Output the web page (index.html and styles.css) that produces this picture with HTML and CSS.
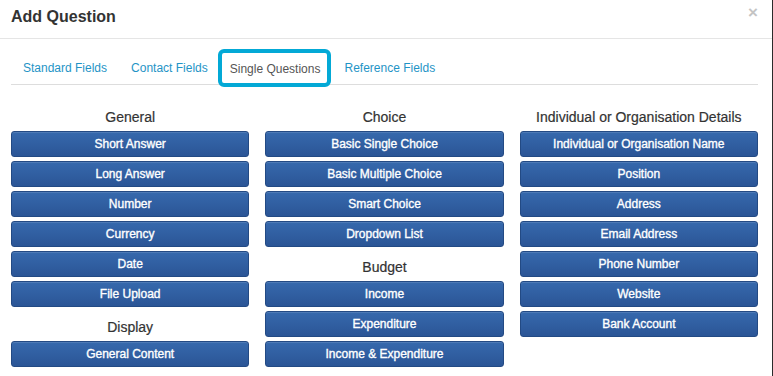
FILE: index.html
```html
<!DOCTYPE html>
<html>
<head>
<meta charset="utf-8">
<link rel="stylesheet" href="styles.css">
</head>
<body>
<div class="modal">
  <div class="modal-header">
    <h4 class="modal-title">Add Question</h4>
    <span class="close">&times;</span>
  </div>
  <div class="modal-body">
    <ul class="tabs">
      <li><a class="tab">Standard Fields</a></li>
      <li><a class="tab">Contact Fields</a></li>
      <li><a class="tab active">Single Questions</a></li>
      <li><a class="tab">Reference Fields</a></li>
    </ul>
    <div class="columns">
      <div class="col">
        <h5 class="group">General</h5>
        <button class="btn">Short Answer</button>
        <button class="btn">Long Answer</button>
        <button class="btn">Number</button>
        <button class="btn">Currency</button>
        <button class="btn">Date</button>
        <button class="btn">File Upload</button>
        <h5 class="group">Display</h5>
        <button class="btn">General Content</button>
      </div>
      <div class="col">
        <h5 class="group">Choice</h5>
        <button class="btn">Basic Single Choice</button>
        <button class="btn">Basic Multiple Choice</button>
        <button class="btn">Smart Choice</button>
        <button class="btn">Dropdown List</button>
        <h5 class="group">Budget</h5>
        <button class="btn">Income</button>
        <button class="btn">Expenditure</button>
        <button class="btn">Income &amp; Expenditure</button>
      </div>
      <div class="col">
        <h5 class="group">Individual or Organisation Details</h5>
        <button class="btn">Individual or Organisation Name</button>
        <button class="btn">Position</button>
        <button class="btn">Address</button>
        <button class="btn">Email Address</button>
        <button class="btn">Phone Number</button>
        <button class="btn">Website</button>
        <button class="btn">Bank Account</button>
      </div>
    </div>
  </div>
</div>
</body>
</html>
```
FILE: styles.css
```css
html, body {
  margin: 0;
  padding: 0;
  height: 100%;
}
body {
  background: #2b2b2b;
  font-family: "Liberation Sans", Arial, sans-serif;
  color: #333;
  overflow: hidden;
}
.modal {
  width: 772px;
  height: 100%;
  background: #fff;
}
.modal-header {
  height: 38px;
  border-bottom: 1px solid #e5e5e5;
  display: flex;
  align-items: center;
  justify-content: space-between;
  padding: 0 14px 0 11px;
}
.modal-title {
  margin: 0;
  font-size: 16px;
  font-weight: bold;
  color: #333;
  position: relative;
  top: -2px;
}
.close {
  font-size: 17px;
  font-weight: bold;
  color: #c4c4c4;
  position: relative;
  top: -6px;
}
.modal-body {
  padding: 9px 14px 0 11px;
}
.tabs {
  list-style: none;
  margin: 0;
  padding: 0;
  display: flex;
  align-items: flex-start;
  border-bottom: 1px solid #ddd;
  height: 36px;
}
.tab {
  display: block;
  height: 36px;
  line-height: 41px;
  padding: 0 12px;
  font-size: 12px;
  color: #1f94c6;
}
.tab.active {
  color: #555;
  margin: 1px 1px 0 -2px;
  height: 30px;
  line-height: 32px;
  padding: 0 7px 0 8px;
  border: 4px solid #03a9d6;
  border-radius: 6px;
  background: #fff;
}
.columns {
  display: grid;
  grid-template-columns: repeat(3, 1fr);
  column-gap: 16px;
  padding-top: 16px;
}
.col {
  display: flex;
  flex-direction: column;
}
.group {
  margin: 0;
  padding: 6px 0 4px;
  line-height: 20px;
  text-align: center;
  font-size: 14px;
  font-weight: normal;
  color: #333;
  -webkit-text-stroke: 0.2px #333;
}
.btn {
  height: 26px;
  margin: 0 0 4px;
  padding: 0;
  border: 1px solid #234a84;
  border-radius: 3px;
  background: linear-gradient(#3669ad, #2b5596);
  color: #fff;
  font-family: "Liberation Sans", Arial, sans-serif;
  font-size: 12px;
  font-weight: normal;
  -webkit-text-stroke: 0.35px #fff;
  text-align: center;
  box-shadow: inset 0 1px 0 rgba(255,255,255,0.12);
}
```
